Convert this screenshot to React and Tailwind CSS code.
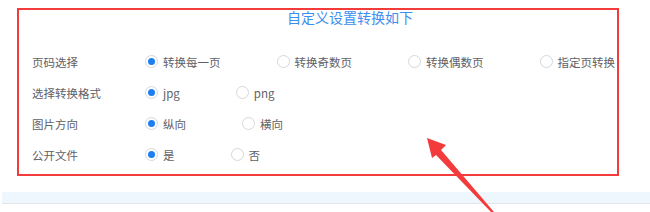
import React from 'react';

const font = { fontFamily: '"Noto Sans CJK SC", "Noto Sans", sans-serif' };

const Radio = ({ checked, label, last }) => (
  <div className={`flex shrink-0 items-center gap-[5px] whitespace-nowrap ${last ? '' : 'mr-[56px]'}`}>
    <span className="w-[13px] h-[13px] shrink-0 rounded-full border border-[#d4d7dc] bg-white flex items-center justify-center">
      {checked && <span className="w-[7px] h-[7px] rounded-full bg-[#1e7ff0]" />}
    </span>
    <span className="text-[11.5px] leading-[14px] text-[#5f6166]">{label}</span>
  </div>
);

const rows = [
  { label: '页码选择', options: ['转换每一页', '转换奇数页', '转换偶数页', '指定页转换'] },
  { label: '选择转换格式', options: ['jpg', 'png'] },
  { label: '图片方向', options: ['纵向', '横向'] },
  { label: '公开文件', options: ['是', '否'] },
];

const App = () => {
  return (
    <div className="relative w-[650px] h-[212px] bg-white overflow-hidden" style={font}>
      <div className="ml-[17px] mt-[8px] w-[602px] h-[168px] border-2 border-[#f43b3b] flex flex-col">
        <div className="pl-[64px] text-center text-[14px] leading-[14px] text-[#3d8ef0] whitespace-nowrap">
          自定义设置转换如下
        </div>
        <div className="mt-[22px] pl-[13px] flex flex-col">
          {rows.map((row) => (
            <div key={row.label} className="h-[31px] flex items-center whitespace-nowrap">
              <div className="w-[113px] shrink-0 text-[11.5px] leading-[14px] text-[#5f6166]">{row.label}</div>
              <div className="flex shrink-0 items-center">
                {row.options.map((opt, i) => (
                  <Radio key={opt} label={opt} checked={i === 0} last={i === row.options.length - 1} />
                ))}
              </div>
            </div>
          ))}
        </div>
      </div>
      <div className="mt-[16px] ml-[2px] h-[12px] bg-[#eef6fe] border-b border-[#e2e5ea]" />

      {/* annotation arrow */}
      <svg className="absolute left-0 top-0 pointer-events-none" width="650" height="212" viewBox="0 0 650 212">
        <polygon
          points="427,138 446,145 441,150 494,212 491,212 436,155 432,158"
          fill="#f43b3b"
        />
      </svg>
    </div>
  );
};

export default App;
